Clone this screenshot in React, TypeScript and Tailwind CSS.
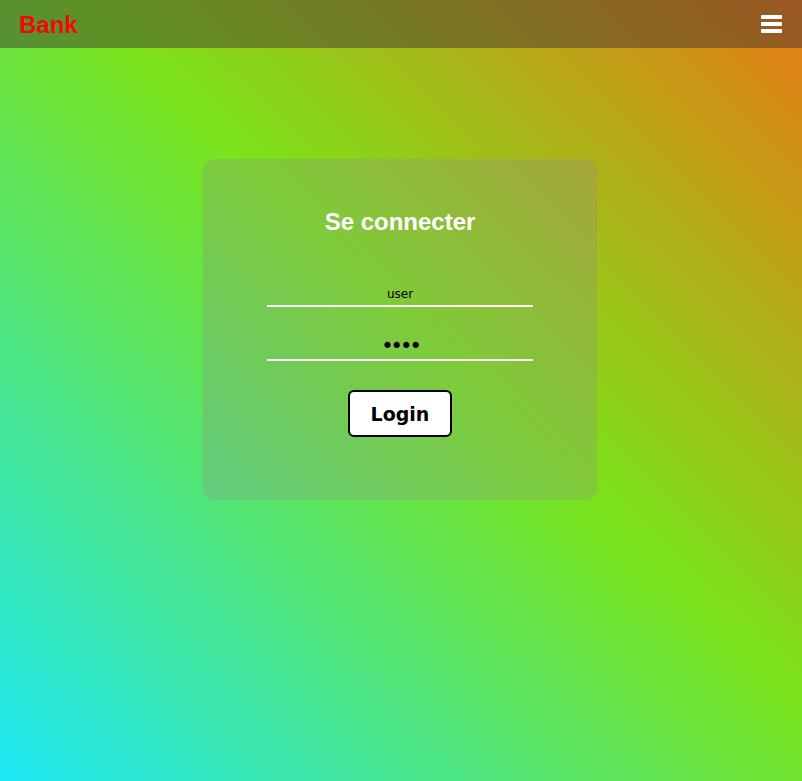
export default function App() {
  return (
    <div className="min-h-[781px] w-full bg-[linear-gradient(to_top_right,#1de9f6_0%,#7ae31a_55%,#e87a14_100%)] font-['Liberation_Sans',Arial,sans-serif]">
      {/* Navbar */}
      <header className="flex h-12 items-center justify-between bg-[rgba(60,45,50,0.45)] pl-[19px] pr-[20px]">
        <span className="pt-[2px] text-[24px] font-bold leading-none text-[#ee0a0a]">Bank</span>
        <button className="flex flex-col gap-[3px] py-1" aria-label="menu">
          <span className="block h-[4px] w-[21px] rounded-[1px] bg-white" />
          <span className="block h-[4px] w-[21px] rounded-[1px] bg-white" />
          <span className="block h-[4px] w-[21px] rounded-[1px] bg-white" />
        </button>
      </header>

      {/* Login card */}
      <div className="flex justify-center pr-[2px] pt-[111px]">
        <div className="flex h-[341px] w-[394px] flex-col items-center rounded-xl bg-[rgba(140,140,140,0.28)]">
          <h1 className="mt-[49px] text-[24px] font-bold leading-[28px] text-white">Se connecter</h1>
          <input
            type="text"
            defaultValue="user"
            className="mt-[47px] h-[24px] w-[266px] border-b-2 border-white bg-transparent text-center font-['DejaVu_Sans',Verdana,sans-serif] text-[12px] text-black outline-none"
          />
          <input
            type="password"
            defaultValue="1234"
            className="mt-[26px] h-[28px] w-[266px] border-b-2 border-white bg-transparent text-center font-['DejaVu_Sans',Verdana,sans-serif] text-[21px] leading-none tracking-[-3px] text-black outline-none"
          />
          <button className="mt-[29px] h-[47px] w-[104px] rounded-[6px] border-2 border-black bg-white pt-[2px] font-['DejaVu_Sans',Verdana,sans-serif] text-[19px] font-bold text-black">
            Login
          </button>
        </div>
      </div>
    </div>
  )
}
